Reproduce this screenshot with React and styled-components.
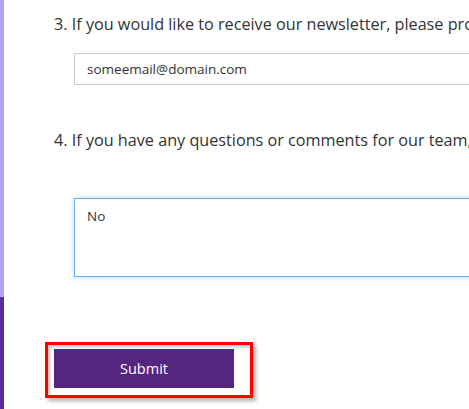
import React from 'react'
import styled, { createGlobalStyle } from 'styled-components'

const GlobalStyle = createGlobalStyle`
  html, body {
    margin: 0;
    padding: 0;
    background: #fff;
    overflow: hidden;
  }
  body {
    font-family: "Open Sans", "Noto Sans", sans-serif;
    color: #333;
  }
`;

const Page = styled.div`
  display: flex;
  width: 469px;
  height: 409px;
  overflow: hidden;
`;

const SideStrip = styled.div`
  display: flex;
  flex-direction: column;
  flex: 0 0 4px;
`;

const StripPart = styled.div`
  background: ${p => p.$dark ? '#5c2d91' : '#b4a5f4'};
  flex: ${p => p.$dark ? '1 1 auto' : '0 0 297px'};
`;

const Form = styled.div`
  display: flex;
  flex-direction: column;
  padding: 13px 0 0 50px;
  flex: 1 1 auto;
  min-width: 0;
`;

const Question = styled.div`
  display: flex;
  flex-direction: column;
  margin-bottom: ${p => p.$gap || 0}px;
`;

const Label = styled.div`
  font-size: 16.2px;
  line-height: 22px;
  white-space: nowrap;
  color: #333;
`;

const TextInput = styled.input`
  margin: 18px 0 0 20px;
  width: 420px;
  height: 32px;
  box-sizing: border-box;
  border: 1px solid #ccc;
  padding: 0 12px;
  font-family: inherit;
  font-size: 13.5px;
  color: #333;
  outline: none;
`;

const TextArea = styled.textarea`
  margin: 47px 0 0 20px;
  width: 420px;
  height: 79px;
  box-sizing: border-box;
  border: 1px solid #66afe9;
  box-shadow: 0 0 6px rgba(102, 175, 233, 0.45);
  padding: 8px 12px;
  font-family: inherit;
  font-size: 13.5px;
  color: #333;
  resize: none;
  outline: none;
`;

const Highlight = styled.div`
  align-self: flex-start;
  margin: 65px 0 0 -9px;
  border: 3px solid #ff0000;
  padding: 4px 16px 7px 6px;
  box-shadow: 3px 3px 4px rgba(0, 0, 0, 0.3), inset 2px 2px 3px rgba(0, 0, 0, 0.25);
`;

const SubmitButton = styled.button`
  display: block;
  width: 180px;
  height: 39px;
  border: none;
  background: #55267f;
  color: #fff;
  font-family: inherit;
  font-size: 14.5px;
  cursor: pointer;
`;

export default function App() {
  return (
    <Page>
      <GlobalStyle />
      <SideStrip>
        <StripPart />
        <StripPart $dark />
      </SideStrip>
      <Form>
        <Question $gap={44}>
          <Label>3. If you would like to receive our newsletter, please provide your email address.</Label>
          <TextInput defaultValue="someemail@domain.com" />
        </Question>
        <Question>
          <Label>4. If you have any questions or comments for our team, please share them below.</Label>
          <TextArea defaultValue="No" />
        </Question>
        <Highlight>
          <SubmitButton>Submit</SubmitButton>
        </Highlight>
      </Form>
    </Page>
  )
}
